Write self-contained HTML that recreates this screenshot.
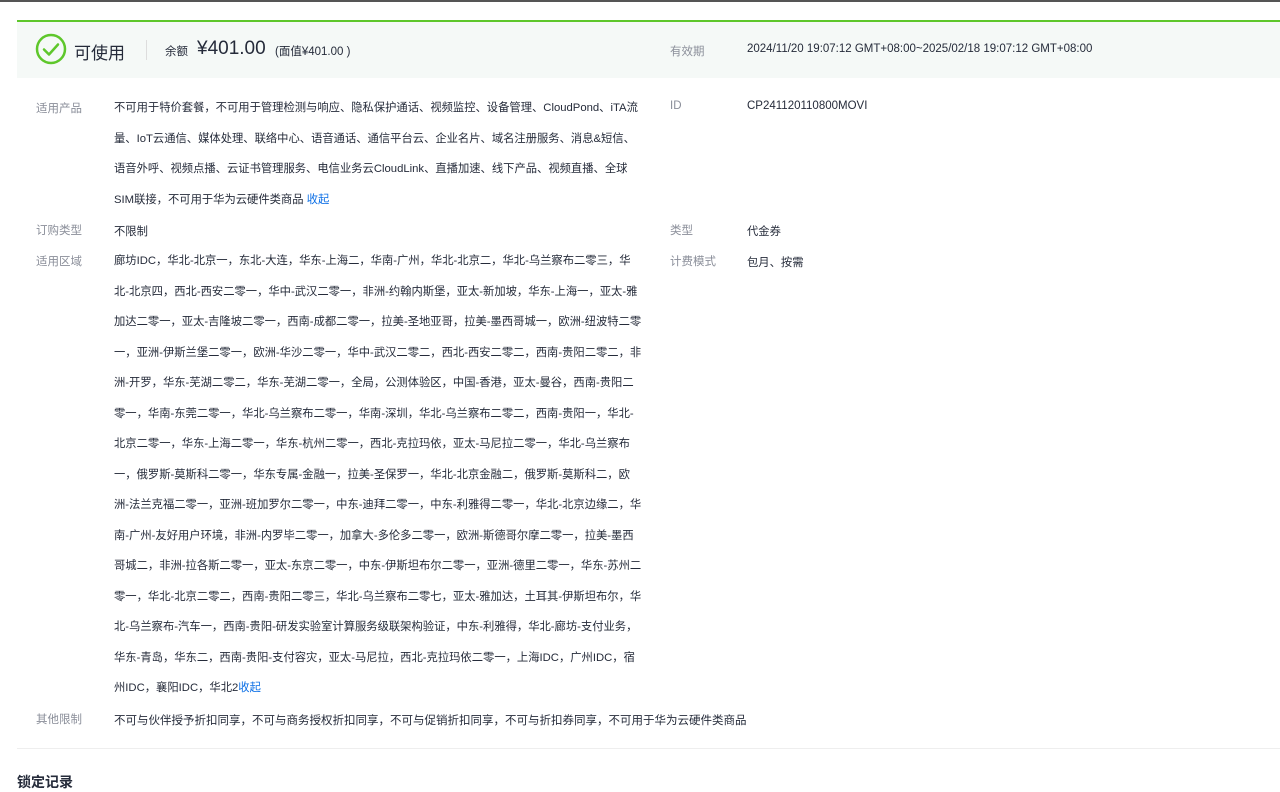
<!DOCTYPE html>
<html><head><meta charset="utf-8"><style>
body{margin:0;width:1280px;height:789px;overflow:hidden;background:#fff;font-family:"Liberation Sans","Noto Sans CJK SC",sans-serif;color:#252b3a;}
.topline{position:absolute;left:0;top:0;width:1280px;height:2px;background:#555;}
.head{position:absolute;left:17px;top:20px;width:1263px;height:56px;background:#f5f9f7;border-top:2px solid #5ec72b;}
.abs{position:absolute;white-space:nowrap;}
.lbl{color:#8a8e99;font-size:11.5px;}
.val{font-size:11.3px;line-height:30.5px;}
a{color:#0a6ee6;text-decoration:none;}
</style></head><body>
<div class="topline"></div>
<div class="head"></div>
<svg class="abs" style="left:35px;top:33px" width="32" height="32" viewBox="0 0 32 32"><circle cx="16" cy="16" r="14" fill="none" stroke="#5ec72b" stroke-width="2.5"/><path d="M9 16.5l5 5 9-10" fill="none" stroke="#5ec72b" stroke-width="2.5" stroke-linecap="round" stroke-linejoin="round"/></svg>
<div class="abs" style="left:74px;top:39px;font-size:17px;">可使用</div>
<div class="abs" style="left:146px;top:40px;width:1px;height:20px;background:#ddd;"></div>
<div class="abs" style="left:165px;top:43px;font-size:11.5px;">余额</div>
<div class="abs" style="left:197px;top:38px;font-size:19px;">¥401.00</div>
<div class="abs" style="left:275px;top:43px;font-size:11.5px;">(面值¥401.00 )</div>
<div class="abs lbl" style="left:670px;top:43px;">有效期</div>
<div class="abs" style="left:747px;top:43px;font-size:11.5px;">2024/11/20 19:07:12 GMT+08:00~2025/02/18 19:07:12 GMT+08:00</div>

<div class="abs lbl" style="left:36px;top:100px;">适用产品</div>
<div class="abs val" style="left:114px;top:93px;">不可用于特价套餐，不可用于管理检测与响应、隐私保护通话、视频监控、设备管理、CloudPond、iTA流<br>量、IoT云通信、媒体处理、联络中心、语音通话、通信平台云、企业名片、域名注册服务、消息&amp;短信、<br>语音外呼、视频点播、云证书管理服务、电信业务云CloudLink、直播加速、线下产品、视频直播、全球<br>SIM联接，不可用于华为云硬件类商品 <a>收起</a></div>
<div class="abs lbl" style="left:670px;top:100px;">ID</div>
<div class="abs" style="left:747px;top:100px;font-size:11.5px;">CP241120110800MOVI</div>

<div class="abs lbl" style="left:36px;top:222px;">订购类型</div>
<div class="abs" style="left:114px;top:223px;font-size:11.3px;">不限制</div>
<div class="abs lbl" style="left:670px;top:222px;">类型</div>
<div class="abs" style="left:747px;top:223px;font-size:11.3px;">代金券</div>

<div class="abs lbl" style="left:36px;top:253px;">适用区域</div>
<div class="abs val" style="left:114px;top:246px;">廊坊IDC，华北-北京一，东北-大连，华东-上海二，华南-广州，华北-北京二，华北-乌兰察布二零三，华<br>北-北京四，西北-西安二零一，华中-武汉二零一，非洲-约翰内斯堡，亚太-新加坡，华东-上海一，亚太-雅<br>加达二零一，亚太-吉隆坡二零一，西南-成都二零一，拉美-圣地亚哥，拉美-墨西哥城一，欧洲-纽波特二零<br>一，亚洲-伊斯兰堡二零一，欧洲-华沙二零一，华中-武汉二零二，西北-西安二零二，西南-贵阳二零二，非<br>洲-开罗，华东-芜湖二零二，华东-芜湖二零一，全局，公测体验区，中国-香港，亚太-曼谷，西南-贵阳二<br>零一，华南-东莞二零一，华北-乌兰察布二零一，华南-深圳，华北-乌兰察布二零二，西南-贵阳一，华北-<br>北京二零一，华东-上海二零一，华东-杭州二零一，西北-克拉玛依，亚太-马尼拉二零一，华北-乌兰察布<br>一，俄罗斯-莫斯科二零一，华东专属-金融一，拉美-圣保罗一，华北-北京金融二，俄罗斯-莫斯科二，欧<br>洲-法兰克福二零一，亚洲-班加罗尔二零一，中东-迪拜二零一，中东-利雅得二零一，华北-北京边缘二，华<br>南-广州-友好用户环境，非洲-内罗毕二零一，加拿大-多伦多二零一，欧洲-斯德哥尔摩二零一，拉美-墨西<br>哥城二，非洲-拉各斯二零一，亚太-东京二零一，中东-伊斯坦布尔二零一，亚洲-德里二零一，华东-苏州二<br>零一，华北-北京二零二，西南-贵阳二零三，华北-乌兰察布二零七，亚太-雅加达，土耳其-伊斯坦布尔，华<br>北-乌兰察布-汽车一，西南-贵阳-研发实验室计算服务级联架构验证，中东-利雅得，华北-廊坊-支付业务，<br>华东-青岛，华东二，西南-贵阳-支付容灾，亚太-马尼拉，西北-克拉玛依二零一，上海IDC，广州IDC，宿<br>州IDC，襄阳IDC，华北2<a>收起</a></div>
<div class="abs lbl" style="left:670px;top:253px;">计费模式</div>
<div class="abs" style="left:747px;top:254px;font-size:11.3px;">包月、按需</div>

<div class="abs lbl" style="left:36px;top:711px;">其他限制</div>
<div class="abs" style="left:114px;top:712px;font-size:11.5px;">不可与伙伴授予折扣同享，不可与商务授权折扣同享，不可与促销折扣同享，不可与折扣券同享，不可用于华为云硬件类商品</div>
<div class="abs" style="left:17px;top:748px;width:1263px;height:1px;background:#eee;"></div>
<div class="abs" style="left:17px;top:772px;font-size:14px;font-weight:bold;">锁定记录</div>
</body></html>
